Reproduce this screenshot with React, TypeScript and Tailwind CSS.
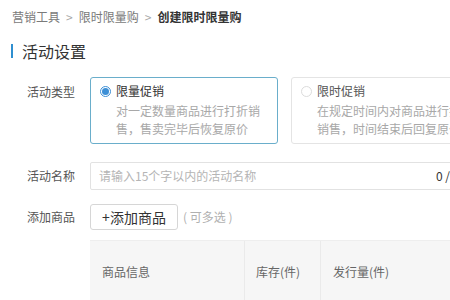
import React from 'react'

const font = { fontFamily: '"Noto Sans CJK SC", "Noto Sans", sans-serif' }

const Radio = ({ checked }: { checked: boolean }) => (
  <span
    className={`inline-flex items-center justify-center w-[11px] h-[11px] rounded-full border ${
      checked ? 'border-[#3d8fd6]' : 'border-[#dcdcdc]'
    }`}
  >
    {checked && <span className="w-[7px] h-[7px] rounded-full bg-[#3d8fd6]" />}
  </span>
)

const TypeCard = ({
  title,
  lines,
  checked,
}: {
  title: string
  lines: string[]
  checked: boolean
}) => (
  <div
    className={`shrink-0 w-[188px] h-[67px] rounded-[3px] border pl-[9px] pt-[5px] ${
      checked ? 'border-[#6aaecb]' : 'border-[#e4e4e4]'
    }`}
  >
    <div className="flex items-center gap-[5px] h-[16px]">
      <Radio checked={checked} />
      <span className={`text-[12px] ${checked ? 'text-[#333]' : 'text-[#555]'}`}>{title}</span>
    </div>
    <div className="pl-[16px] mt-[3px] text-[12px] leading-[18px] text-[#a8a8a8] whitespace-nowrap">
      {lines.map((l) => (
        <div key={l}>{l}</div>
      ))}
    </div>
  </div>
)

export default function App() {
  return (
    <div className="w-[450px] h-[300px] overflow-hidden bg-white" style={font}>
      {/* breadcrumb */}
      <div className="flex items-center h-[14px] mt-[10px] pl-[12px] text-[12px] text-[#7a7a7a] whitespace-nowrap">
        <span>营销工具</span>
        <span className="mx-[6px] text-[#aaa]">&gt;</span>
        <span>限时限量购</span>
        <span className="mx-[6px] text-[#aaa]">&gt;</span>
        <span className="font-bold text-[#333]">创建限时限量购</span>
      </div>

      {/* section title */}
      <div className="flex items-center mt-[19px] pl-[11px] h-[16px]">
        <span className="w-[2px] h-[14px] bg-[#2f8fd0]" />
        <span className="ml-[9px] text-[16px] text-[#333] leading-none">活动设置</span>
      </div>

      {/* 活动类型 */}
      <div className="flex mt-[18px]">
        <div className="w-[90px] pl-[27px] pt-[6px] text-[12px] text-[#555] shrink-0">活动类型</div>
        <div className="flex gap-[13px]">
          <TypeCard
            checked
            title="限量促销"
            lines={['对一定数量商品进行打折销', '售，售卖完毕后恢复原价']}
          />
          <TypeCard
            checked={false}
            title="限时促销"
            lines={['在规定时间内对商品进行打折', '销售，时间结束后回复原价']}
          />
        </div>
      </div>

      {/* 活动名称 */}
      <div className="flex items-center mt-[18px]">
        <div className="w-[90px] pl-[27px] text-[12px] text-[#555] shrink-0">活动名称</div>
        <div className="flex items-center justify-between w-[370px] h-[28px] border border-[#e2e2e2] rounded-[2px] pl-[8px] pr-[8px] shrink-0">
          <span className="text-[12px] text-[#b5b5b5]">请输入15个字以内的活动名称</span>
          <span className="text-[12px] text-[#333] mr-[1px]">0 /</span>
        </div>
      </div>

      {/* 添加商品 */}
      <div className="flex items-center mt-[14px]">
        <div className="w-[90px] pl-[27px] text-[12px] text-[#555] shrink-0">添加商品</div>
        <button className="w-[88px] h-[26px] border border-[#d6d6d6] rounded-[3px] text-[14px] text-[#333] bg-white">
          +添加商品
        </button>
        <span className="ml-[5px] text-[12px] text-[#b0b0b0]">( 可多选 )</span>
      </div>

      {/* table */}
      <div className="flex mt-[10px] ml-[90px] w-[370px] h-[62px] bg-[#f6f6f6] border-t border-[#eee] text-[12px] text-[#666]">
        <div className="w-[155px] flex items-center pl-[12px] border-r border-[#eaeaea]">商品信息</div>
        <div className="w-[76px] flex items-center pl-[11px] border-r border-[#eaeaea]">库存(件)</div>
        <div className="flex-1 flex items-center pl-[12px]">发行量(件)</div>
      </div>
    </div>
  )
}
